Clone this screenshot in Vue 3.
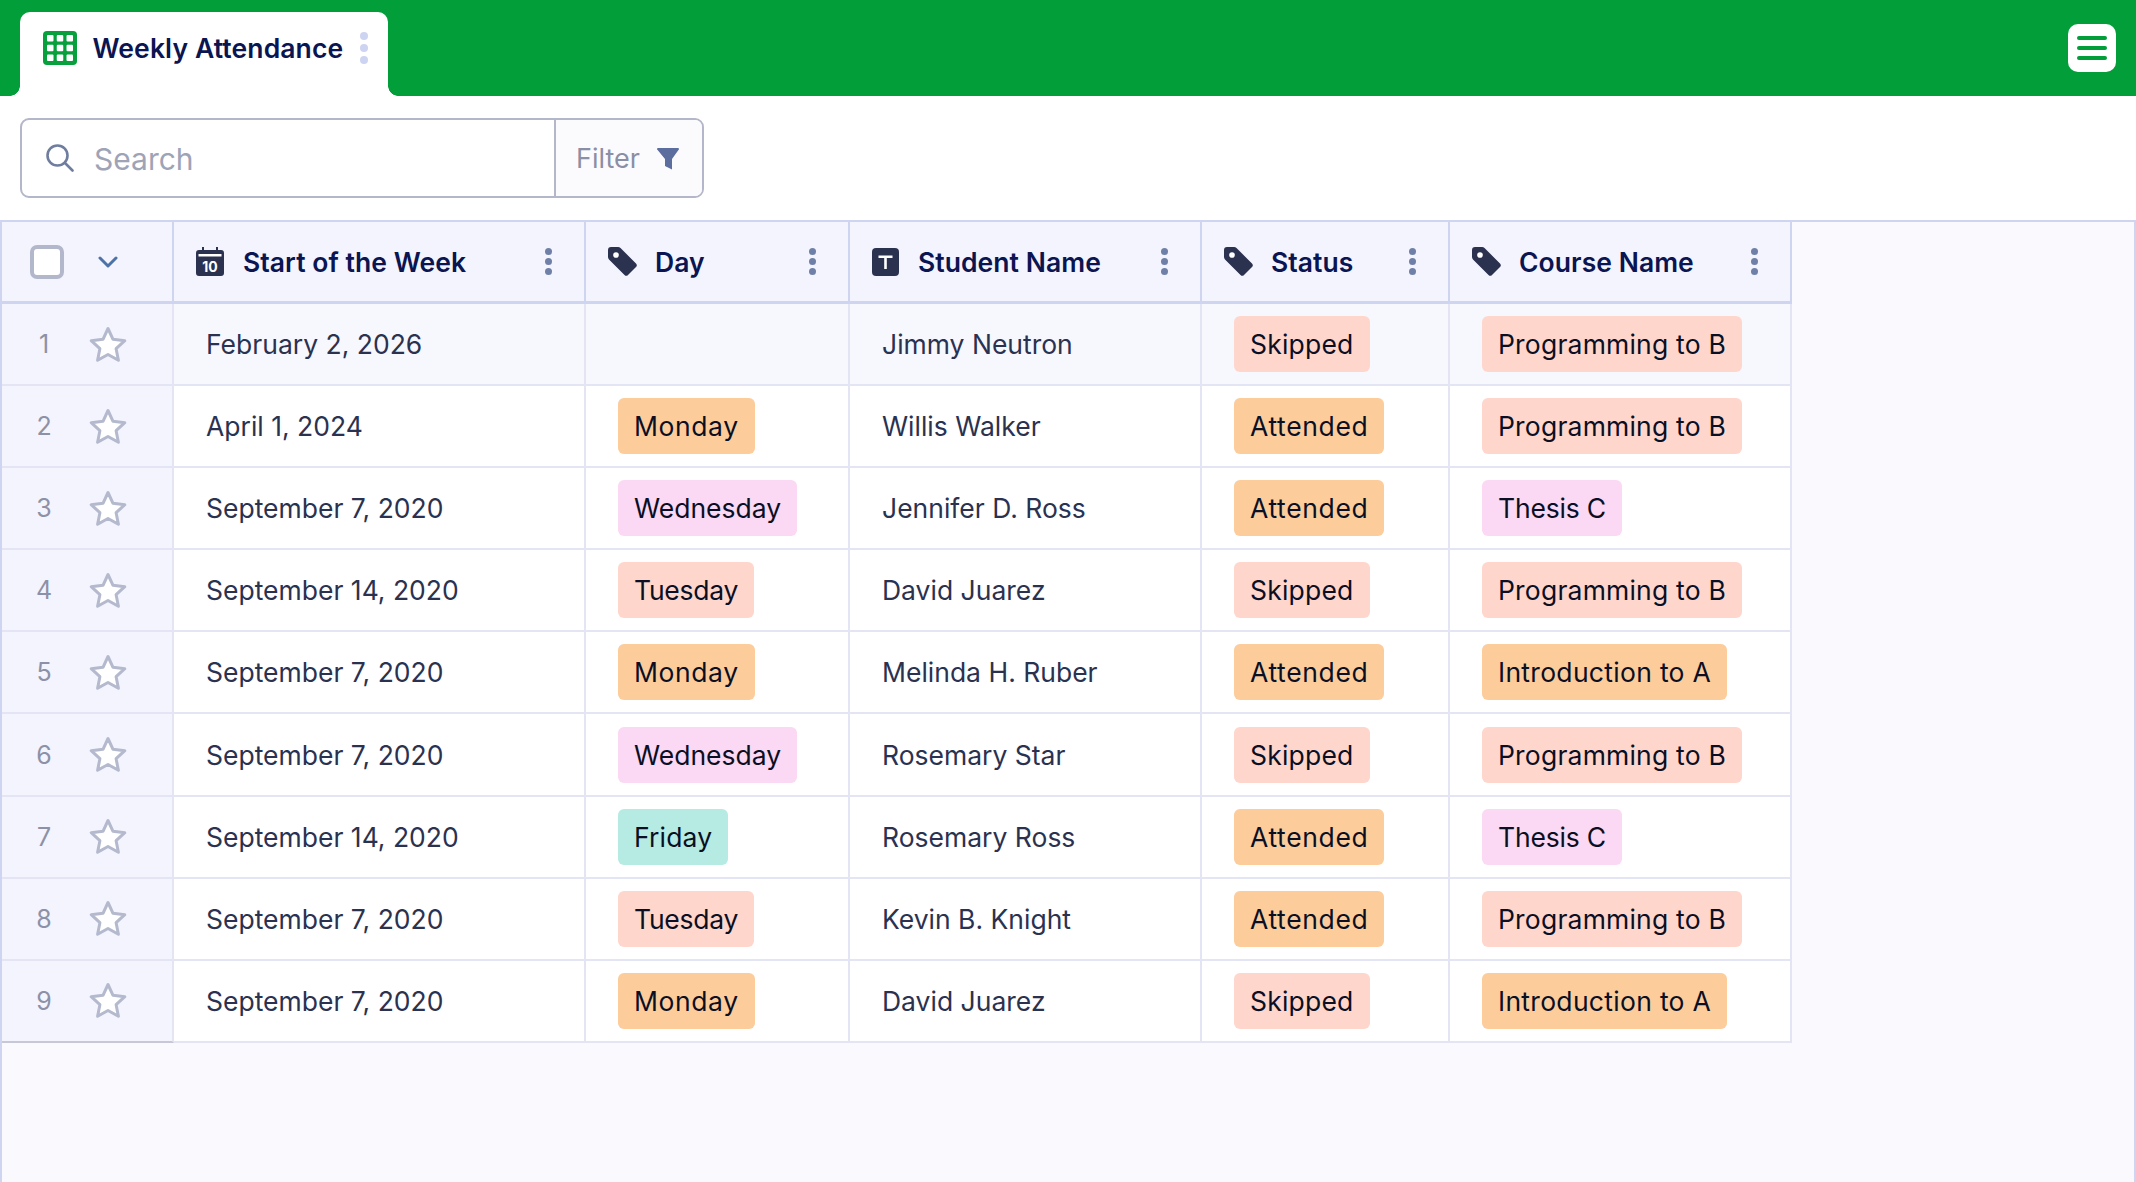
<script setup>
const columns = [
  { name: 'Start of the Week', icon: 'cal' },
  { name: 'Day', icon: 'tag' },
  { name: 'Student Name', icon: 'text' },
  { name: 'Status', icon: 'tag' },
  { name: 'Course Name', icon: 'tag' },
]
const tone = {
  Skipped: 'salmon', Tuesday: 'salmon', 'Programming to B': 'salmon',
  Attended: 'orange', Monday: 'orange', 'Introduction to A': 'orange',
  Wednesday: 'pink', 'Thesis C': 'pink', Friday: 'teal',
}
const tracking = {
  Skipped: 0.2, Tuesday: -0.25, 'Programming to B': 0.2,
  Attended: 0.65, Monday: 0.6, 'Introduction to A': 0.3,
  Wednesday: 0, 'Thesis C': -0.2, Friday: 0.15,
}
const rows = [
  ['February 2, 2026', '', 'Jimmy Neutron', 'Skipped', 'Programming to B'],
  ['April 1, 2024', 'Monday', 'Willis Walker', 'Attended', 'Programming to B'],
  ['September 7, 2020', 'Wednesday', 'Jennifer D. Ross', 'Attended', 'Thesis C'],
  ['September 14, 2020', 'Tuesday', 'David Juarez', 'Skipped', 'Programming to B'],
  ['September 7, 2020', 'Monday', 'Melinda H. Ruber', 'Attended', 'Introduction to A'],
  ['September 7, 2020', 'Wednesday', 'Rosemary Star', 'Skipped', 'Programming to B'],
  ['September 14, 2020', 'Friday', 'Rosemary Ross', 'Attended', 'Thesis C'],
  ['September 7, 2020', 'Tuesday', 'Kevin B. Knight', 'Attended', 'Programming to B'],
  ['September 7, 2020', 'Monday', 'David Juarez', 'Skipped', 'Introduction to A'],
]
const gridCells = [0, 1, 2].flatMap((y) => [0, 1, 2].map((x) => ({ x: 4 + x * 9.75, y: 4 + y * 9.75 })))
</script>

<template>
  <div class="page">
    <header class="topbar">
      <div class="tab">
        <svg class="tab-icon" viewBox="0 0 34 34">
          <rect width="34" height="34" rx="4" fill="#07a03c" />
          <rect v-for="(c, i) in gridCells" :key="i" :x="c.x" :y="c.y" width="6.500" height="6.500" rx="1" fill="#fff" />
        </svg>
        <span class="tab-title">Weekly Attendance</span>
        <span class="kebab kebab-light"><i></i><i></i><i></i></span>
      </div>
      <button class="menu-btn"><i></i><i></i><i></i></button>
    </header>

    <div class="toolbar">
      <div class="search">
        <div class="search-field">
          <svg class="search-icon" viewBox="0 0 28 28" fill="none" stroke="#6f7d9f" stroke-width="2.6" stroke-linecap="round">
            <circle cx="11.5" cy="11.5" r="10" />
            <path d="M19 19l7.5 7.5" />
          </svg>
          <span class="placeholder">Search</span>
        </div>
        <div class="filter">
          <span>Filter</span>
          <svg class="filter-icon" viewBox="0 0 22 22"><path d="M1 0h20a1 1 0 0 1 .8 1.6L15 11v10.500L8 18v-7L.2 1.600A1 1 0 0 1 1 0z" fill="#5b6e9e" /></svg>
        </div>
      </div>
    </div>

    <main class="sheet">
      <div class="table">
        <div class="cell head lead">
          <span class="checkbox"></span>
          <svg class="chevron" viewBox="0 0 20 12" fill="none" stroke="#4c72a8" stroke-width="3" stroke-linecap="round" stroke-linejoin="round"><path d="M2 2l8 8 8-8" /></svg>
        </div>
        <div v-for="col in columns" :key="col.name" class="cell head">
          <svg v-if="col.icon === 'cal'" class="col-icon" viewBox="0 0 28 29">
            <path d="M3 3h3V0h2v3h12V0h2v3h3a3 3 0 0 1 3 3v20a3 3 0 0 1-3 3H3a3 3 0 0 1-3-3V6a3 3 0 0 1 3-3z" fill="#2b3250" />
            <rect x="2.500" y="7" width="23" height="2.500" fill="#fff" />
            <text x="14" y="25" text-anchor="middle" class="cal-num">10</text>
          </svg>
          <svg v-else-if="col.icon === 'tag'" class="col-icon col-icon-tag" viewBox="0 0 29 29">
            <path d="M3 0h7a3.500 3.500 0 0 1 2.500 1L28 16.500a2.500 2.500 0 0 1 0 3.500l-8 8a2.500 2.500 0 0 1-3.500 0L1 12.500A3.500 3.500 0 0 1 0 10V3a3 3 0 0 1 3-3z" fill="#2b3250" />
            <circle cx="8" cy="8" r="2.800" fill="#fff" />
          </svg>
          <svg v-else class="col-icon col-icon-text" viewBox="0 0 27 28">
            <rect width="27" height="28" rx="4" fill="#2b3250" />
            <path d="M6.500 7.500h14v2.500h-5.700v11h-2.600V10H6.500z" fill="#fff" />
          </svg>
          <span class="col-name">{{ col.name }}</span>
          <span class="kebab"><i></i><i></i><i></i></span>
        </div>

        <template v-for="(row, r) in rows" :key="r">
          <div class="cell lead body-lead" :class="{ 'last-lead': r === rows.length - 1 }">
            <span class="num">{{ r + 1 }}</span>
            <svg class="star" viewBox="0 0 38 37"><path d="M19 2.500l5 10.800 11.800 1.400-8.700 8 2.300 11.600L19 28.500 8.600 34.300l2.300-11.600-8.700-8 11.800-1.400z" fill="#fff" stroke="#b4b9cd" stroke-width="3" stroke-linejoin="round" /></svg>
          </div>
          <div v-for="(val, c) in row" :key="c" class="cell body" :class="{ hover: r === 0 }">
            <span v-if="tone[val]" class="pill" :class="tone[val]" :style="{ letterSpacing: tracking[val] + 'px' }">{{ val }}</span>
            <span v-else class="plain">{{ val }}</span>
          </div>
        </template>
      </div>
    </main>
  </div>
</template>

<style>
html, body { margin: 0; background: #fff; }
</style>

<style scoped>
.page {
  width: 2136px;
  height: 1182px;
  display: flex;
  flex-direction: column;
  overflow: hidden;
  font-family: Inter, "Liberation Sans", sans-serif;
}
.topbar {
  flex: 0 0 96px;
  box-sizing: border-box;
  background: #029e39;
  display: flex;
  align-items: flex-start;
  justify-content: space-between;
  padding: 12px 20px 0;
}
.tab {
  position: relative;
  width: 368px;
  height: 84px;
  box-sizing: border-box;
  background: #fff;
  border-radius: 10px 10px 0 0;
  display: flex;
  align-items: flex-start;
  padding: 19px 0 0 23px;
}
.tab::before, .tab::after {
  content: "";
  position: absolute;
  bottom: 0;
  width: 10px;
  height: 10px;
}
.tab::before { left: -10px; background: radial-gradient(circle at 0 0, #029e39 9.500px, #fff 10px); }
.tab::after { right: -10px; background: radial-gradient(circle at 100% 0, #029e39 9.500px, #fff 10px); }
.tab-icon { width: 34px; height: 34px; flex: none; }
.tab-title {
  margin-left: 15.500px;
  line-height: 34px;
  font-size: 26.500px;
  font-weight: 600;
  color: #0a1551;
  letter-spacing: 0.12px;
  white-space: nowrap;
}
.kebab {
  display: flex;
  flex-direction: column;
  gap: 3px;
  margin-left: auto;
}
.kebab i {
  width: 7px;
  height: 7px;
  border-radius: 50%;
  background: #6f80a8;
}
.kebab-light { position: absolute; left: 340px; top: 20px; gap: 4px; }
.kebab-light i { width: 8px; height: 8px; background: #cdd4f1; }
.menu-btn {
  width: 48px;
  height: 48px;
  margin: 12px 0 0;
  padding: 0;
  border: 0;
  border-radius: 10px;
  background: #fff;
  display: flex;
  flex-direction: column;
  align-items: center;
  justify-content: center;
  gap: 6px;
}
.menu-btn i {
  width: 30px;
  height: 4px;
  border-radius: 2px;
  background: #029e39;
}
.toolbar {
  flex: 0 0 124px;
  box-sizing: border-box;
  padding: 22px 20px 0;
}
.search {
  width: 684px;
  height: 80px;
  box-sizing: border-box;
  border: 2.500px solid #b3b7c9;
  border-radius: 9px;
  display: flex;
  overflow: hidden;
}
.search-field {
  flex: 0 0 532px;
  display: flex;
  align-items: center;
  padding-left: 24px;
  gap: 20px;
  box-sizing: border-box;
}
.search-icon { width: 28px; height: 28px; flex: none; }
.placeholder { font-size: 30px; color: #9ea3b6; position: relative; top: 1px; }
.filter {
  flex: 1;
  border-left: 2.500px solid #b3b7c9;
  background: #fbfbfe;
  display: flex;
  align-items: center;
  padding-left: 20px;
  gap: 17px;
  font-size: 27px;
  color: #8b8fa5;
}
.filter-icon { width: 22px; height: 22px; flex: none; position: relative; top: 1px; }
.sheet {
  flex: 1;
  box-sizing: border-box;
  background: #f9f9fe;
  border-top: 2px solid #cfd5f0;
  border-left: 2px solid #cfd5f0;
  border-right: 2px solid #cfd5f0;
}
.table {
  display: grid;
  width: 1790px;
  grid-template-columns: 172px 412px 264px 352px 248px 342px;
  grid-template-rows: 82px;
  grid-auto-rows: 82.100px;
}
.cell {
  box-sizing: border-box;
  display: flex;
  align-items: center;
  border-right: 2px solid #e3e5f5;
  border-bottom: 2px solid #e3e5f5;
  background: #fff;
  font-size: 26.500px;
  color: #2b3250;
}
.head {
  background: #f3f4fd;
  border-right-color: #cfd5f0;
  border-bottom: 3px solid #cfd5f0;
  padding: 0 0 0 22px;
}
.head.lead, .body-lead { padding: 0 0 0 28px; background: #f3f4fd; }
.last-lead { border-bottom-color: #c6c8d8; }
.checkbox {
  width: 34px;
  height: 34px;
  box-sizing: border-box;
  border: 4px solid #b2b7cb;
  border-radius: 7px;
  background: #fff;
}
.chevron { width: 20px; height: 12px; margin-left: 34px; }
.col-icon { width: 28px; height: 29px; flex: none; }
.col-icon-tag { width: 29px; margin-right: -1px; }
.col-icon-text { width: 27px; height: 28px; }
.cal-num { font-size: 14px; font-weight: 700; fill: #fff; font-family: Inter, sans-serif; }
.col-name {
  margin-left: 19px;
  font-weight: 600;
  color: #0a1551;
  white-space: nowrap;
  font-size: 26.500px;
  letter-spacing: 0.06px;
}
.head .kebab { margin-right: 32px; }
.num { width: 28px; text-align: center; color: #8d91a7; font-size: 25px; }
.star { width: 38px; height: 37px; margin-left: 31px; flex: none; }
.body { padding-left: 32px; }
.hover { background: #f7f7fe; }
.plain { white-space: nowrap; }
.pill {
  height: 56px;
  box-sizing: border-box;
  padding: 0 16px;
  display: inline-flex;
  align-items: center;
  border-radius: 6px;
  color: #0a0f24;
  white-space: nowrap;
}
.salmon { background: #ffd6cc; }
.orange { background: #fdcc9b; }
.pink { background: #fbd8f3; }
.teal { background: #b5ebe3; }
</style>
